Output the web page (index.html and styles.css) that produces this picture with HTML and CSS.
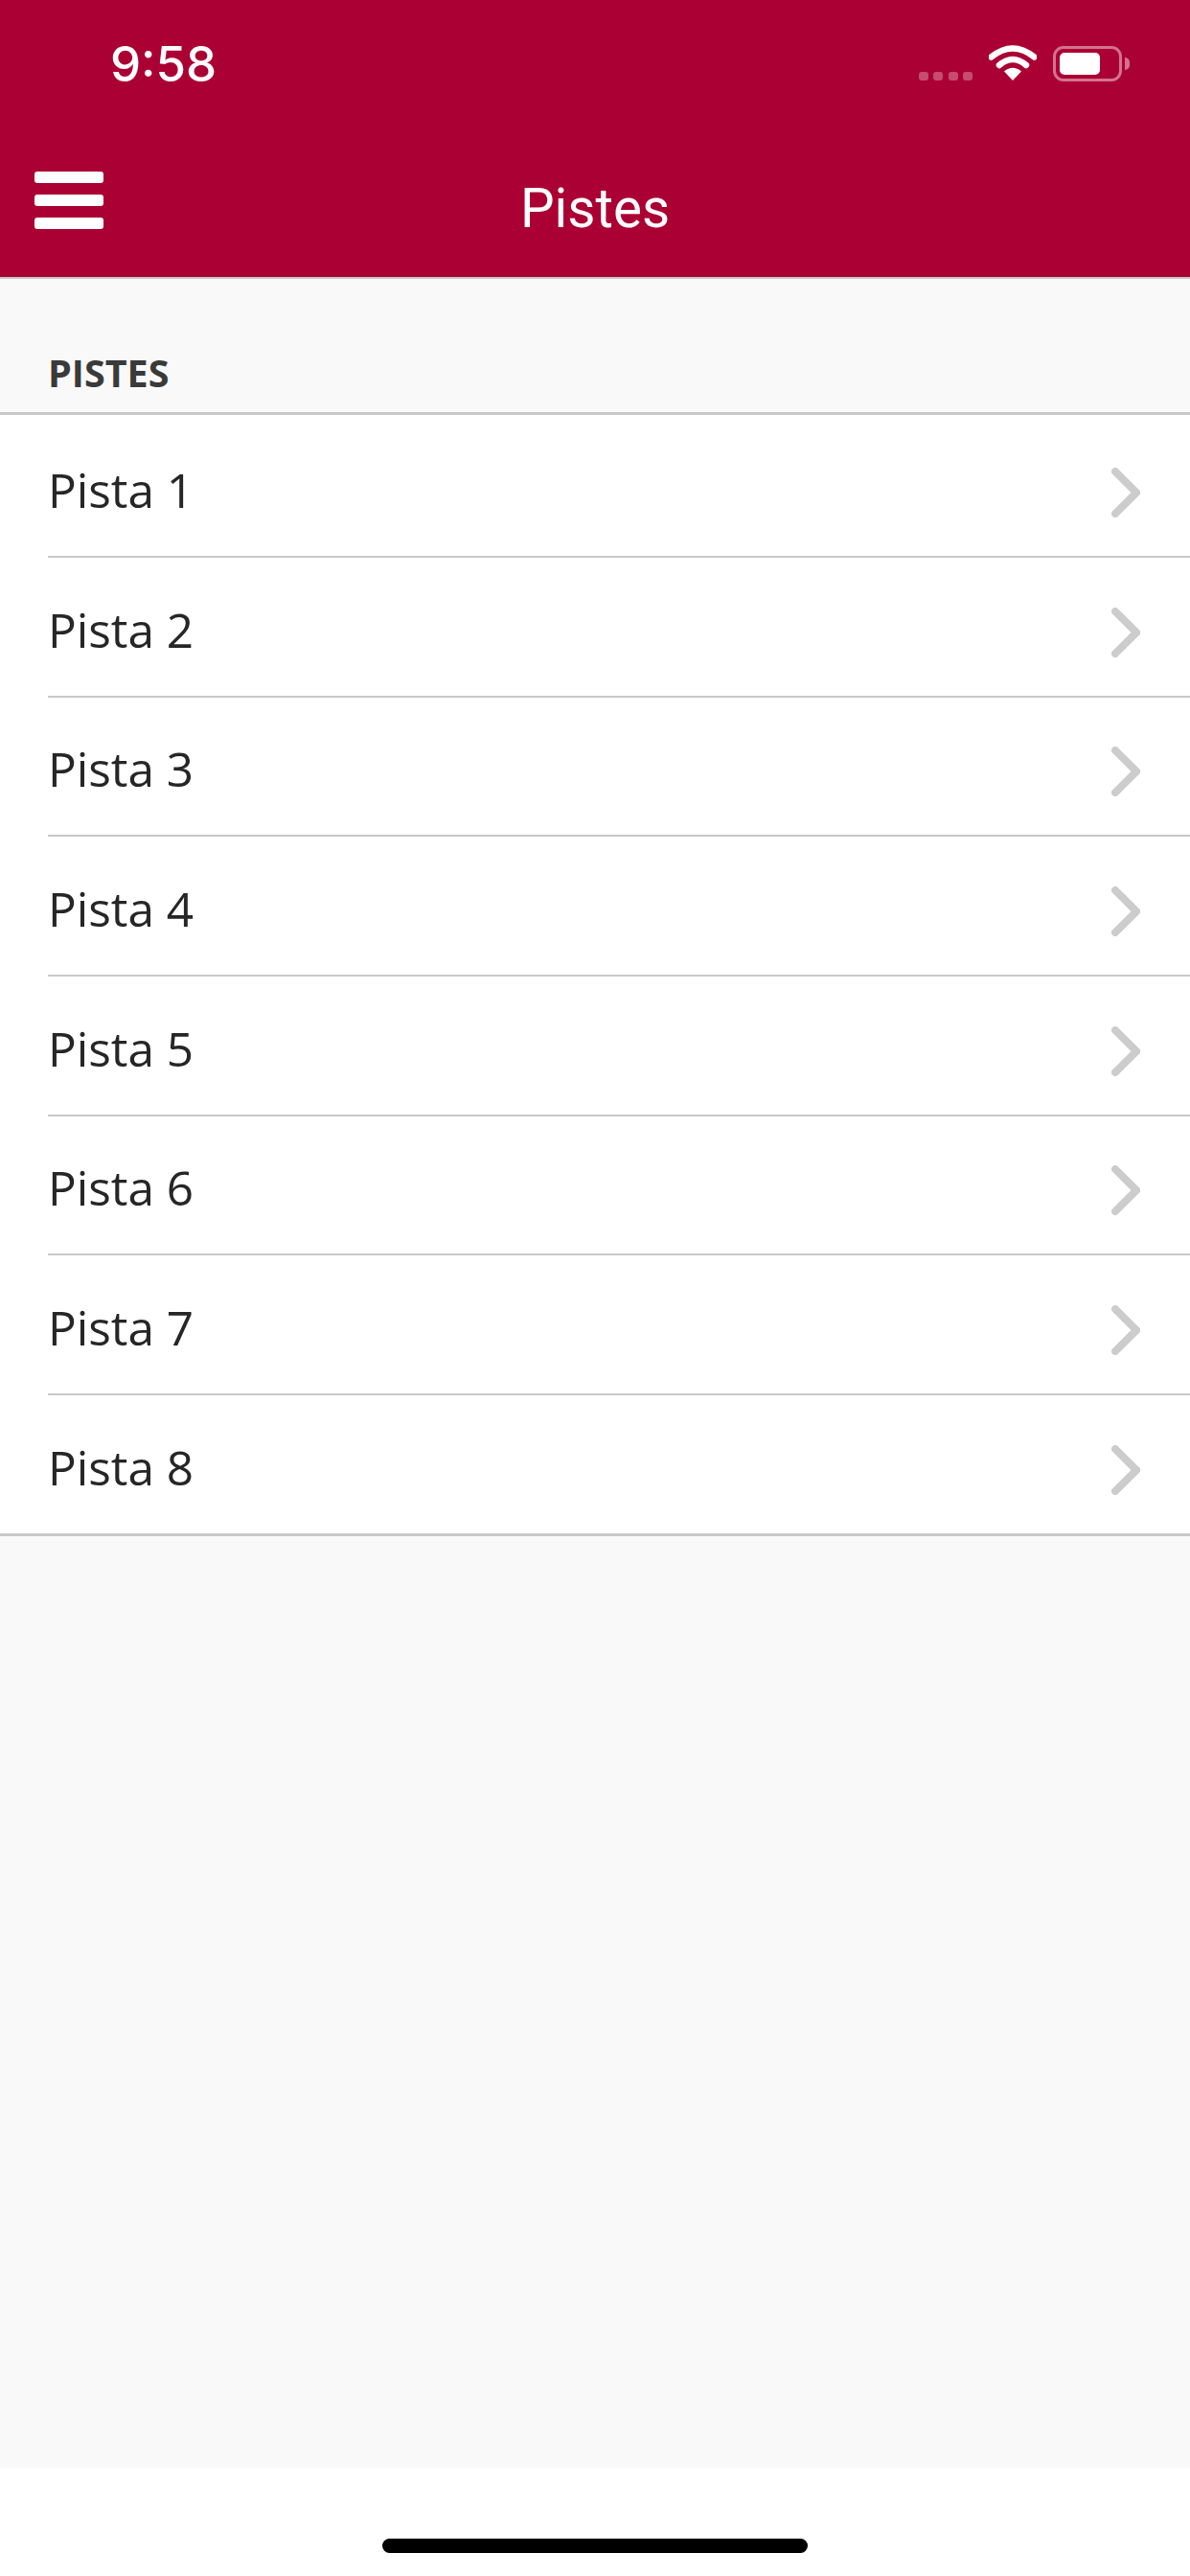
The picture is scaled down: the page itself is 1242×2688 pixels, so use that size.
FILE: index.html
```html
<!DOCTYPE html>
<html lang="ca">
<head>
    <meta charset="UTF-8">
    <meta name="viewport" content="width=device-width, initial-scale=1.0">
    <title>Pistes</title>
    <link rel="stylesheet" href="styles.css">
</head>
<body>
    <div class="app">
        <header class="top-bar">
            <div class="status-bar">
                <span class="status-time">9:58</span>
                <div class="status-icons">
                    <div class="signal-dots"><i></i><i></i><i></i><i></i></div>
                    <svg class="wifi" width="50" height="37" viewBox="0 0 50 37">
                        <path d="M25 37 L16 27.5 Q25 20 34 27.5 Z" fill="#fff"/>
                        <path d="M2.5 12.5 Q25 -5.5 47.5 12.5" fill="none" stroke="#fff" stroke-width="6.5" stroke-linecap="round"/>
                        <path d="M11 21 Q25 9 39 21" fill="none" stroke="#fff" stroke-width="6.5" stroke-linecap="round"/>
                    </svg>
                    <div class="battery">
                        <div class="battery-body"><div class="battery-level"></div></div>
                        <div class="battery-cap"></div>
                    </div>
                </div>
            </div>
            <div class="nav-bar">
                <button class="menu-btn" aria-label="Menu"><span></span><span></span><span></span></button>
                <h1 class="nav-title">Pistes</h1>
            </div>
        </header>

        <main class="content">
            <h2 class="section-title">PISTES</h2>
            <ul class="track-list">
                <li class="track-row"><span class="track-name">Pista 1</span><svg class="chevron" width="30" height="52" viewBox="0 0 30 52"><path d="M4 4 L26 26 L4 48"/></svg></li>
                <li class="track-row"><span class="track-name">Pista 2</span><svg class="chevron" width="30" height="52" viewBox="0 0 30 52"><path d="M4 4 L26 26 L4 48"/></svg></li>
                <li class="track-row"><span class="track-name">Pista 3</span><svg class="chevron" width="30" height="52" viewBox="0 0 30 52"><path d="M4 4 L26 26 L4 48"/></svg></li>
                <li class="track-row"><span class="track-name">Pista 4</span><svg class="chevron" width="30" height="52" viewBox="0 0 30 52"><path d="M4 4 L26 26 L4 48"/></svg></li>
                <li class="track-row"><span class="track-name">Pista 5</span><svg class="chevron" width="30" height="52" viewBox="0 0 30 52"><path d="M4 4 L26 26 L4 48"/></svg></li>
                <li class="track-row"><span class="track-name">Pista 6</span><svg class="chevron" width="30" height="52" viewBox="0 0 30 52"><path d="M4 4 L26 26 L4 48"/></svg></li>
                <li class="track-row"><span class="track-name">Pista 7</span><svg class="chevron" width="30" height="52" viewBox="0 0 30 52"><path d="M4 4 L26 26 L4 48"/></svg></li>
                <li class="track-row"><span class="track-name">Pista 8</span><svg class="chevron" width="30" height="52" viewBox="0 0 30 52"><path d="M4 4 L26 26 L4 48"/></svg></li>
            </ul>
        </main>

        <footer class="home-area">
            <div class="home-indicator"></div>
        </footer>
    </div>
</body>
</html>
```

FILE: styles.css
```css
* {
    margin: 0;
    padding: 0;
    box-sizing: border-box;
}

body {
    width: 1242px;
    height: 2688px;
    overflow: hidden;
    background: white;
    font-family: "Open Sans", sans-serif;
}

.app {
    display: flex;
    flex-direction: column;
    height: 2688px;
}

/* top bar */
.top-bar {
    height: 291px;
    background: #ab0033;
    border-bottom: 2px solid #c8c8c8;
    color: white;
}

.status-bar {
    display: flex;
    justify-content: space-between;
    height: 130px;
    padding: 48px 63px 0 115px;
}

.status-time {
    font-family: Inter, sans-serif;
    font-size: 51px;
    font-weight: 500;
    line-height: 37px;
}

.status-icons {
    display: flex;
    align-items: flex-start;
}

.signal-dots {
    display: flex;
    gap: 5.5px;
    margin-top: 27px;
    margin-right: 17px;
}

.signal-dots i {
    width: 10px;
    height: 9px;
    border-radius: 3px;
    background: rgba(255, 255, 255, 0.3);
}

.wifi {
    margin-right: 17px;
    margin-top: -1px;
}

.battery {
    display: flex;
    align-items: center;
    height: 37px;
}

.battery-body {
    width: 72px;
    height: 37px;
    padding: 4px;
    border: 3px solid rgba(255, 255, 255, 0.45);
    border-radius: 11px;
}

.battery-level {
    width: 42px;
    height: 23px;
    border-radius: 5px;
    background: white;
}

.battery-cap {
    width: 5px;
    height: 13px;
    margin-left: 3px;
    border-radius: 0 6px 6px 0;
    background: rgba(255, 255, 255, 0.45);
}

.nav-bar {
    position: relative;
    display: flex;
    justify-content: center;
    height: 159px;
}

.menu-btn {
    position: absolute;
    left: 36px;
    top: 49px;
    display: flex;
    flex-direction: column;
    gap: 12px;
    width: 72px;
    border: none;
    background: none;
}

.menu-btn span {
    height: 12px;
    border-radius: 3px;
    background: white;
}

.nav-title {
    font-family: Roboto, sans-serif;
    font-size: 56.5px;
    font-weight: 400;
    line-height: 78px;
    margin-top: 49px;
}

/* list */
.content {
    flex: 1;
    background: #f9f9f9;
}

.section-title {
    height: 139px;
    padding: 73px 50px 0;
    font-size: 39.5px;
    font-weight: 700;
    line-height: 50px;
    color: #3a3a3a;
}

.track-list {
    list-style: none;
    background: white;
    border-top: 3px solid #c8c8c8;
    border-bottom: 3px solid #c8c8c8;
}

.track-row {
    position: relative;
    display: flex;
    align-items: center;
    justify-content: space-between;
    height: 145.67px;
    padding: 8px 52px 0 50px;
}

.track-row:first-child {
    height: 147px;
}

.track-row + .track-row::before {
    content: "";
    position: absolute;
    left: 50px;
    right: 0;
    top: 0;
    height: 2px;
    background: #c8c8c8;
}

.track-name {
    font-size: 49.5px;
    color: #262626;
}

.chevron {
    margin-top: 6px;
}

.chevron path {
    fill: none;
    stroke: #cccccc;
    stroke-width: 8;
    stroke-linecap: round;
    stroke-linejoin: miter;
}

/* home indicator */
.home-area {
    display: flex;
    justify-content: center;
    height: 113px;
    padding-top: 74px;
    background: white;
}

.home-indicator {
    width: 444px;
    height: 15px;
    border-radius: 8px;
    background: black;
}
```
